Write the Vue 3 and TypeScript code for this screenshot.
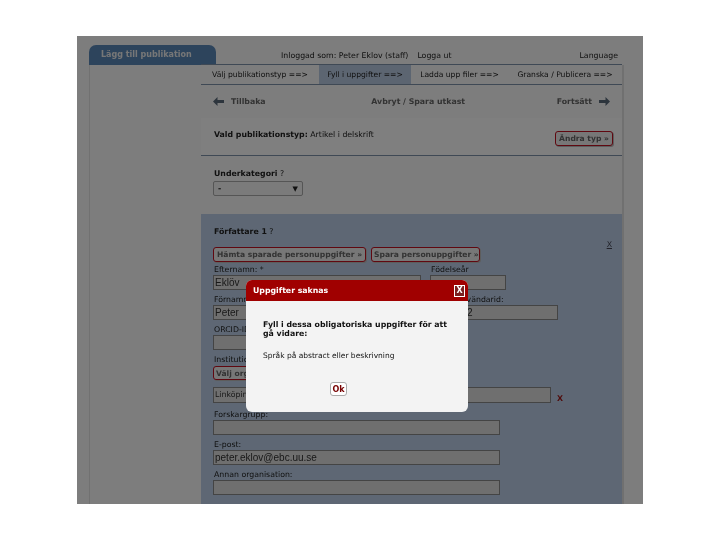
<script setup lang="ts">
const steps = [
  { label: 'Välj publikationstyp ==>', active: false },
  { label: 'Fyll i uppgifter ==>', active: true },
  { label: 'Ladda upp filer ==>', active: false },
  { label: 'Granska / Publicera ==>', active: false },
]
</script>

<template>
  <div class="screen">
    <div class="page">
      <header class="top">
        <div class="tab">Lägg till publikation</div>
        <div class="login"><span>Inloggad som: Peter Eklov (staff)</span><span>Logga ut</span></div>
        <div class="lang">Language</div>
      </header>
      <div class="columns">
        <aside class="side"></aside>
        <main class="main">
          <nav class="steps">
            <div v-for="s in steps" :key="s.label" class="step" :class="{ active: s.active }">{{ s.label }}</div>
          </nav>
          <div class="actions">
            <span class="act">
              <svg width="11" height="9" viewBox="0 0 11 9"><path d="M0 4.5 4.5 0v3H11v3H4.5v3z" /></svg>
              <b>Tillbaka</b>
            </span>
            <b class="center">Avbryt / Spara utkast</b>
            <span class="act">
              <b>Fortsätt</b>
              <svg width="11" height="9" viewBox="0 0 11 9"><path d="M11 4.5 6.5 0v3H0v3h6.5v3z" /></svg>
            </span>
          </div>
          <section class="type">
            <div><b>Vald publikationstyp:</b> Artikel i delskrift</div>
            <button class="btn">Ändra typ »</button>
          </section>
          <section class="sub">
            <div class="subtitle"><b>Underkategori</b> ?</div>
            <div class="select"><span>-</span><i>▼</i></div>
          </section>
          <section class="author">
            <div class="a-head"><b>Författare 1</b> ?</div>
            <div class="a-btns">
              <button class="btn">Hämta sparade personuppgifter »</button>
              <button class="btn">Spara personuppgifter »</button>
              <a class="remove">X</a>
            </div>
            <div class="row">
              <label class="f w208">Efternamn: *<span class="inp big">Eklöv</span></label>
              <label class="f w76">Födelseår<span class="inp"></span></label>
            </div>
            <div class="row">
              <label class="f w208">Förnamn: *<span class="inp big">Peter</span></label>
              <label class="f w128">Lokalt användarid:<span class="inp big">peeklo12</span></label>
            </div>
            <label class="f w208">ORCID-ID:<span class="inp"></span></label>
            <div class="f inst">
              Institution:
              <button class="btn pick">Välj organisation »</button>
              <div class="row-inst">
                <span class="inp wide">Linköpings universitet</span>
                <b class="x">X</b>
              </div>
            </div>
            <label class="f w287 gap1">Forskargrupp:<span class="inp"></span></label>
            <label class="f w287">E-post:<span class="inp big">peter.eklov@ebc.uu.se</span></label>
            <label class="f w287 gap2">Annan organisation:<span class="inp"></span></label>
          </section>
        </main>
      </div>
    </div>
    <div class="overlay"></div>
    <div class="modal">
      <div class="m-head">
        <b>Uppgifter saknas</b>
        <span class="close">X</span>
      </div>
      <div class="m-body">
        <p class="m-strong">Fyll i dessa obligatoriska uppgifter för att gå vidare:</p>
        <p class="m-item">Språk på abstract eller beskrivning</p>
        <button class="ok">Ok</button>
      </div>
    </div>
  </div>
</template>

<style>
html, body { background: #fff; }
</style>

<style scoped>
.screen {
  position: relative;
  width: 566px;
  height: 468px;
  margin: 36px 0 0 77px;
  overflow: hidden;
  font-family: "DejaVu Sans", sans-serif;
  font-size: 7.8px;
  color: #222;
}
.page { height: 100%; background: #fafafa; padding: 9px 19px 0 12px; box-sizing: border-box; filter: blur(0.35px); }
.top { display: flex; align-items: center; height: 20px; }
.tab {
  width: 127px;
  height: 20px;
  box-sizing: border-box;
  padding: 5px 0 0 12px;
  background: #5a88b8;
  border-radius: 7px 7px 0 0;
  color: #eee;
  font-weight: 700;
  font-size: 8px;
}
.login { display: flex; gap: 9px; margin-left: 65px; }
.lang { margin-left: auto; margin-right: 6px; }
.columns { display: flex; height: 439px; }
.side { width: 112px; flex: none; box-sizing: border-box; border-left: 1px solid #e2e2e2; }
.main { flex: 1; min-width: 0; border-right: 2px solid #e0e0e0; }
.steps { display: flex; height: 19px; font-size: 7.6px; border-bottom: 1px solid #7f93ab; border-top: 1px solid #7f93ab; margin-top: -1px; }
.step { display: flex; align-items: center; justify-content: center; white-space: nowrap; }
.step:nth-child(1) { width: 118px; }
.step:nth-child(2) { width: 92px; background: #b8cae2; }
.step:nth-child(3) { width: 97px; }
.step:nth-child(4) { flex: 1; }
.actions { display: flex; align-items: center; justify-content: space-between; height: 33px; padding: 0 12px; color: #666; }
.act { display: inline-flex; align-items: center; gap: 7px; }
.act svg { fill: #5a6a7a; }
.center { margin-left: 14px; }
.type {
  display: flex; align-items: center; justify-content: space-between;
  height: 38px; box-sizing: border-box; padding: 0 9px 0 13px;
  background: #fff; border-bottom: 1px solid #7f93ab;
}
.type > div { margin-top: -4px; }
.btn {
  height: 15px; padding: 0 2px; font: 700 7.6px "DejaVu Sans", sans-serif;
  color: #666; background: #eee; border: 1px solid #c01020; border-radius: 3px; box-shadow: 1px 1px 0 #bbb; white-space: nowrap;
}
.type .btn { width: 58px; margin-top: 3px; }
.sub { height: 58px; padding: 13px 13px 0; box-sizing: border-box; }
.subtitle { height: 12px; }
.select { display: flex; justify-content: space-between; align-items: center; width: 90px; height: 15px; margin-left: -1px; box-sizing: border-box; padding: 0 4px; border: 1px solid #aaa; border-radius: 2px; background: #f6f6f6; font-weight: 700; }
.select i { font-style: normal; font-size: 7px; }
.author { height: 290px; background: #bccfe8; padding: 13px 12px 0; box-sizing: border-box; position: relative; }
.a-head { height: 20px; padding-left: 1px; }
.a-btns { display: flex; gap: 5px; height: 15px; margin-bottom: 3px; }
.a-btns .btn:nth-child(1) { width: 153px; }
.a-btns .btn:nth-child(2) { width: 109px; }
.remove { position: absolute; right: 10px; top: 26px; color: #445; text-decoration: underline; }
.row { display: flex; gap: 9px; }
.f { display: block; line-height: 9px; text-indent: 1px; }
.inp { display: block; height: 15px; box-sizing: border-box; margin: 1px 0 5px; padding-left: 1px; border: 1px solid #888; background: #dedede; font: 10px/13px "Liberation Sans", sans-serif; text-indent: 0; color: #333; overflow: hidden; white-space: nowrap; }
.w208 { width: 208px; }
.w76 { width: 76px; }
.w128 { width: 128px; }
.w287 { width: 287px; }
.pick { display: block; width: 90px; height: 14px; margin: 2px 0 7px; text-align: left; text-indent: 0; }
.row-inst { display: flex; gap: 6px; align-items: flex-end; text-indent: 0; }
.wide { width: 338px; height: 16px; margin: 0; font: 7.8px/14px "DejaVu Sans", sans-serif; }
.x { color: #a01818; }
.gap1 { margin-top: 7px; }
.gap2 { margin-top: 3px; }
.overlay { position: absolute; inset: 0; background: rgba(0, 0, 0, .5); }
.modal { position: absolute; left: 169px; top: 244px; width: 222px; height: 132px; border-radius: 6px; background: #f3f3f3; overflow: hidden; filter: blur(0.25px); }
.m-head { display: flex; align-items: center; justify-content: space-between; height: 21px; padding: 0 3px 0 7px; background: #a00000; color: #fff; }
.close { width: 9px; height: 10px; border: 1px solid #fff; font-weight: 700; font-size: 8px; line-height: 10px; text-align: center; background: #7a2020; }
.m-body { padding: 19px 10px 0 17px; color: #111; }
.m-strong { margin: 0; font-weight: 700; line-height: 9px; }
.m-item { margin: 13px 0 0; font-size: 7.5px; }
.ok { display: block; width: 17px; height: 14px; padding: 0; margin: 22px 0 0 67px; font: 700 8px "DejaVu Sans", sans-serif; color: #700; background: #fff; border: 1px solid #aaa; border-radius: 3px; }
</style>
